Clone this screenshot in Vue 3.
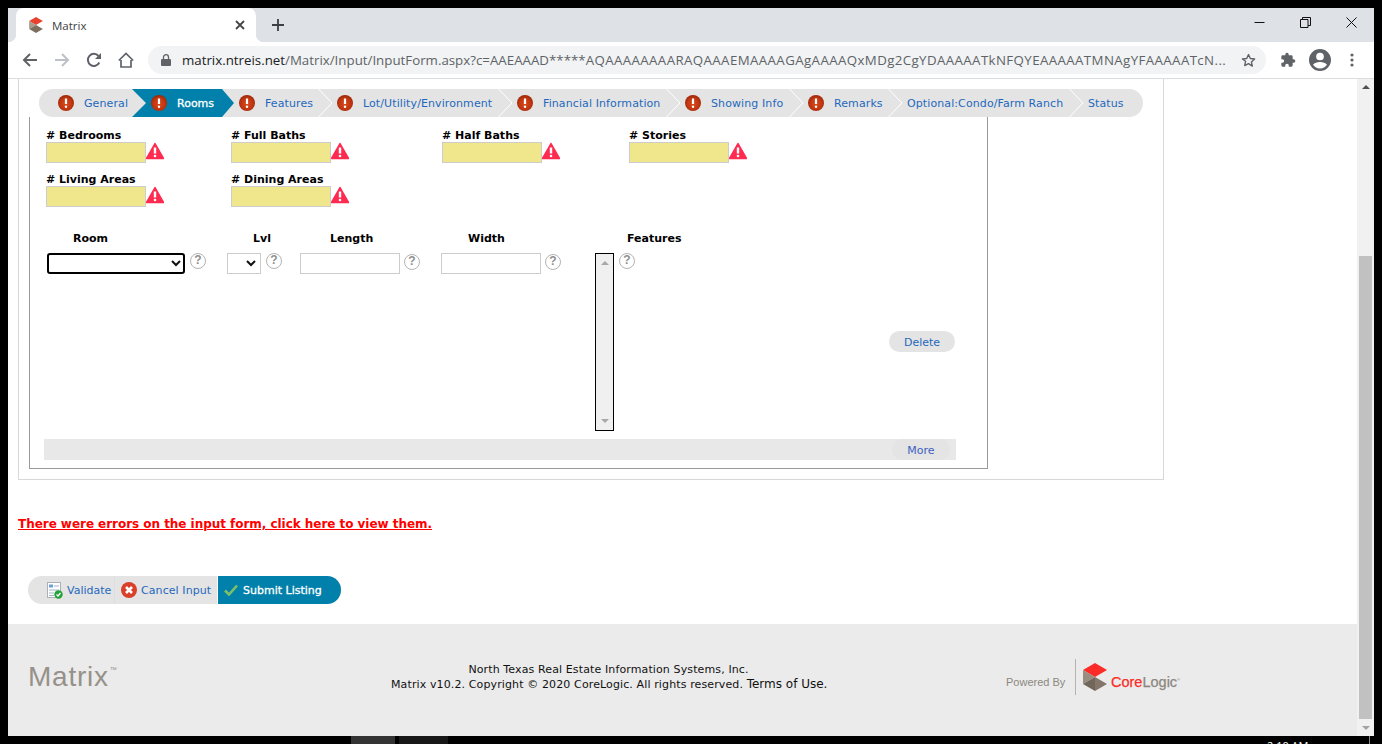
<script setup>
const steps = [
  { label: 'General', error: true },
  { label: 'Rooms', error: true, active: true },
  { label: 'Features', error: true, tight: true, chevron: true },
  { label: 'Lot/Utility/Environment', error: true, chevron: true },
  { label: 'Financial Information', error: true, chevron: true },
  { label: 'Showing Info', error: true, chevron: true },
  { label: 'Remarks', error: true, chevron: true },
  { label: 'Optional:Condo/Farm Ranch', chevron: true },
  { label: 'Status' }
]
const fields = ['# Bedrooms', '# Full Baths', '# Half Baths', '# Stories', '# Living Areas', '# Dining Areas']
</script>

<template>
  <div class="screen">
    <svg class="defs" width="0" height="0">
      <defs>
        <radialGradient id="errg" cx="50%" cy="55%" r="55%">
          <stop offset="0" stop-color="#dc4a1c" />
          <stop offset="0.7" stop-color="#bd3510" />
          <stop offset="1" stop-color="#982607" />
        </radialGradient>
      </defs>
    </svg>
    <div class="window">
      <div class="tabstrip">
        <div class="tab">
          <svg class="favicon" width="14" height="16" viewBox="0 0 24 28">
            <path d="M0 7 12 0l12 7-12 7z" fill="#e8432e" />
            <path d="M0 7l12 7-12 7z" fill="#a99b8c" />
            <path d="M0 21l12-7 12 7-12 7z" fill="#7d6f60" />
          </svg>
          <span class="tab-title">Matrix</span>
          <svg class="tab-close" width="10" height="10" viewBox="0 0 10 10">
            <path d="M1 1l8 8M9 1l-8 8" stroke="#44474a" stroke-width="1.8" />
          </svg>
        </div>
        <svg class="new-tab" width="12" height="12" viewBox="0 0 12 12">
          <path d="M6 0v12M0 6h12" stroke="#3c4043" stroke-width="1.8" />
        </svg>
        <div class="win-controls">
          <svg width="11" height="11" viewBox="0 0 11 11"><path d="M.5 5.500h10" stroke="#111" stroke-width="1" /></svg>
          <svg width="11" height="11" viewBox="0 0 11 11" fill="none"><path d="M.5 2.500h7.500v8h-7.500z M2.500 2.500v-2h8v8h-2.500" stroke="#111" stroke-width="1" /></svg>
          <svg width="11" height="11" viewBox="0 0 11 11"><path d="M.5.5l10 10M10.500.5l-10 10" stroke="#111" stroke-width="1" /></svg>
        </div>
      </div>

      <div class="toolbar">
        <div class="nav-icons">
          <svg width="16" height="16" viewBox="0 0 16 16" fill="none"><path d="M15 8H2M8 2 2 8l6 6" stroke="#5f6368" stroke-width="2" /></svg>
          <svg width="16" height="16" viewBox="0 0 16 16" fill="none"><path d="M1 8h13M8 2l6 6-6 6" stroke="#bdc1c6" stroke-width="2" /></svg>
          <svg width="16" height="16" viewBox="0 0 16 16" fill="none"><path d="M13.300 10.500A6 6 0 1 1 12.500 4" stroke="#5f6368" stroke-width="2" /><path d="M15 1v6H9z" fill="#5f6368" /></svg>
          <svg width="16" height="16" viewBox="0 0 16 16" fill="none"><path d="M3 8v7h10V8M.8 8.500 8 1.500l7.200 7" stroke="#5f6368" stroke-width="1.700" /></svg>
        </div>
        <div class="omnibox">
          <svg class="lock" width="10" height="12" viewBox="0 0 10 12">
            <path d="M1 5h8a1 1 0 0 1 1 1v5a1 1 0 0 1-1 1H1a1 1 0 0 1-1-1V6a1 1 0 0 1 1-1z" fill="#5f6368" />
            <path d="M2.500 5V3.200a2.500 2.500 0 0 1 5 0V5" fill="none" stroke="#5f6368" stroke-width="1.300" />
          </svg>
          <span class="url"><span class="host">matrix.ntreis.net</span>/Matrix/Input/InputForm.aspx?c=AAEAAAD*****<span class="token">AQAAAAAAAARAQAAAEMAAAAGAgAAAAQxMDg2CgYDAAAAATkNFQYEAAAAATMNAgYFAAAAATcN...</span></span>
          <svg class="star" width="15" height="15" viewBox="0 0 24 24" fill="none"><path d="M12 2.500l2.900 6.300 6.900.8-5.100 4.700 1.400 6.800L12 17l-6.100 3.100 1.400-6.800L2.200 9.600l6.900-.8z" stroke="#5f6368" stroke-width="2.200" stroke-linejoin="round" /></svg>
        </div>
        <div class="ext-icons">
          <svg width="16" height="16" viewBox="0 0 24 24"><path fill="#5f6368" d="M20.500 11H19V7a2 2 0 0 0-2-2h-4V3.500a2.500 2.500 0 0 0-5 0V5H4a2 2 0 0 0-2 2v3.800h1.500a2.700 2.700 0 0 1 0 5.400H2V20a2 2 0 0 0 2 2h3.800v-1.500a2.700 2.700 0 0 1 5.400 0V22H17a2 2 0 0 0 2-2v-4h1.500a2.500 2.500 0 0 0 0-5z" /></svg>
          <svg width="22" height="22" viewBox="0 0 24 24"><path fill="#5f6368" fill-rule="evenodd" d="M12 0a12 12 0 1 0 0 24 12 12 0 0 0 0-24zm0 4a4.200 4.200 0 1 1 0 8.400A4.200 4.200 0 0 1 12 4zm0 17.300a9.300 9.300 0 0 1-7.600-4c.9-2 4.900-3.100 7.600-3.100s6.700 1.100 7.600 3.100a9.300 9.300 0 0 1-7.600 4z" /></svg>
          <svg width="4" height="14" viewBox="0 0 4 14"><circle cx="2" cy="2" r="1.600" fill="#5f6368" /><circle cx="2" cy="7" r="1.600" fill="#5f6368" /><circle cx="2" cy="12" r="1.600" fill="#5f6368" /></svg>
        </div>
      </div>

      <div class="viewport">
        <div class="page">
          <div class="panel">
            <nav class="steps">
              <div v-for="s in steps" :key="s.label" class="step" :class="{ active: s.active, tight: s.tight }">
                <svg v-if="s.error" class="err" width="16" height="16" viewBox="0 0 16 16">
                  <circle cx="8" cy="8" r="8" fill="url(#errg)" />
                  <path d="M8 3.500v5.500" stroke="#fff" stroke-width="2.200" />
                  <circle cx="8" cy="11.800" r="1.200" fill="#fff" />
                </svg>
                <span>{{ s.label }}</span>
                <svg v-if="s.chevron" class="chev" width="15" height="28" viewBox="0 0 15 28" fill="none">
                  <path d="M.5 0 14 14 .5 28" stroke="#fff" stroke-width="1" />
                </svg>
              </div>
            </nav>

            <div class="box">
              <div class="fields">
                <div v-for="l in fields" :key="l" class="field">
                  <label>{{ l }}</label>
                  <div class="input-line">
                    <div class="req-input"></div>
                    <svg class="warn" width="18" height="18" viewBox="0 0 18 18">
                      <path d="M9 1.500 17.500 16.500H.5z" fill="#fe2b50" stroke="#fe2b50" stroke-width="1.500" stroke-linejoin="round" />
                      <path d="M9 5.500v6" stroke="#fff" stroke-width="2.400" />
                      <circle cx="9" cy="14" r="1.300" fill="#fff" />
                    </svg>
                  </div>
                </div>
              </div>

              <div class="room-heads">
                <b class="h-room">Room</b>
                <b class="h-lvl">Lvl</b>
                <b class="h-len">Length</b>
                <b class="h-wid">Width</b>
                <b class="h-fea">Features</b>
              </div>

              <div class="room-row">
                <div class="room-select">
                  <svg width="10" height="7" viewBox="0 0 10 7" fill="none"><path d="M1 1l4 4 4-4" stroke="#111" stroke-width="2" /></svg>
                </div>
                <span class="q">?</span>
                <div class="lvl-select">
                  <svg width="10" height="7" viewBox="0 0 10 7" fill="none"><path d="M1 1l4 4 4-4" stroke="#111" stroke-width="2" /></svg>
                </div>
                <span class="q">?</span>
                <div class="plain-input len"></div>
                <span class="q low">?</span>
                <div class="plain-input wid"></div>
                <span class="q low">?</span>
                <div class="listbox">
                  <i class="up"></i>
                  <i class="down"></i>
                </div>
                <span class="q">?</span>
                <div class="delete">Delete</div>
              </div>

              <div class="more-bar"><span class="more">More</span></div>
            </div>
          </div>

          <a class="error-link">There were errors on the input form, click here to view them.</a>

          <div class="actions">
            <div class="act validate">
              <svg width="16" height="17" viewBox="0 0 16 17">
                <rect x=".5" y=".5" width="13" height="15" fill="#fff" stroke="#aab0b6" />
                <rect x="2" y="2.500" width="4" height="3" fill="#6f9fd8" />
                <path d="M7 4h5M2 8h10M2 11h5M2 13.500h5" stroke="#9fb4c8" />
                <circle cx="11.500" cy="12.500" r="4.200" fill="#23a23a" />
                <path d="M9.500 12.500l1.500 1.500 2.500-3" stroke="#fff" stroke-width="1.300" fill="none" />
              </svg>
              <span>Validate</span>
            </div>
            <div class="act cancel">
              <svg width="16" height="16" viewBox="0 0 16 16">
                <circle cx="8" cy="8" r="8" fill="#d8402a" />
                <path d="M5 5l6 6M11 5l-6 6" stroke="#fff" stroke-width="2.600" />
              </svg>
              <span>Cancel Input</span>
            </div>
            <div class="act submit">
              <svg width="14" height="12" viewBox="0 0 14 12" fill="none"><path d="M1 6.500 5 10.500 13 1.500" stroke="#7cc06a" stroke-width="2.600" /></svg>
              <span>Submit Listing</span>
            </div>
          </div>

          <footer class="foot">
            <div class="foot-logo">Matrix<sup>™</sup></div>
            <div class="foot-text">
              <div>North Texas Real Estate Information Systems, Inc.</div>
              <div>Matrix v10.2. Copyright © 2020 CoreLogic. All rights reserved. <span class="terms">Terms of Use.</span></div>
            </div>
            <div class="foot-brand">
              <span class="powered">Powered By</span>
              <span class="brand-rule"></span>
              <svg width="24" height="28" viewBox="0 0 24 28">
                <path d="M0 7 12 0l12 7-12 7z" fill="#fb2b27" />
                <path d="M0 7l12 7L0 21z" fill="#9a8d80" />
                <path d="M12 14l12 7-12 7z" fill="#84766a" />
                <path d="M0 21l12-7v14z" fill="#72655a" />
              </svg>
              <span class="wordmark"><span class="core">Core</span>Logic<sup>®</sup></span>
            </div>
          </footer>
        </div>

        <div class="scrollbar">
          <i class="sb-up"></i>
          <div class="sb-track"><div class="sb-thumb"></div></div>
          <i class="sb-down"></i>
        </div>
      </div>
    </div>
    <div class="taskbar">
      <span class="task-btn"></span>
      <span class="task-btn2"></span>
      <span class="clock">2:10 AM</span>
      <span class="task-line"></span>
    </div>
  </div>
</template>

<style>
html, body { margin: 0; background: #000; overflow: hidden; }
</style>

<style scoped>
.screen { width: 1382px; height: 744px; background: #000; position: relative; overflow: hidden; }
.defs { position: absolute; }
.window { position: absolute; left: 8px; top: 8px; width: 1366px; height: 728px; display: flex; flex-direction: column; background: #fff; font-family: "DejaVu Sans", Verdana, sans-serif; }

.tabstrip { height: 34px; flex: none; background: #dee1e6; display: flex; align-items: center; padding-left: 8px; }
.tab { position: relative; width: 240px; height: 34px; box-sizing: border-box; background: #fff; border-radius: 8px 8px 0 0; display: flex; align-items: center; padding: 0 11px 0 13px; align-self: flex-end; }
.tab::before, .tab::after { content: ""; position: absolute; bottom: 0; width: 8px; height: 8px; }
.tab::before { left: -8px; background: radial-gradient(circle at 0 0, transparent 8px, #fff 8.500px); }
.tab::after { right: -8px; background: radial-gradient(circle at 100% 0, transparent 8px, #fff 8.500px); }
.favicon { flex: none; margin-right: 9px; }
.tab-title { font: 11.500px "Open Sans", "Noto Sans", sans-serif; color: #3c4043; flex: 1; }
.new-tab { margin-left: 16px; }
.win-controls { margin-left: auto; display: flex; gap: 35px; padding-right: 17px; align-self: flex-start; padding-top: 9px; }

.toolbar { height: 36px; flex: none; background: #fff; display: flex; align-items: center; border-bottom: 1px solid #dadce0; }
.nav-icons { display: flex; gap: 16px; padding-left: 14px; width: 126px; box-sizing: border-box; flex: none; margin-right: 14px; }
.omnibox { width: 1118px; height: 28px; flex: none; background: #f1f3f4; border-radius: 14px; display: flex; align-items: center; box-sizing: border-box; padding: 0 10px 0 13px; }
.lock { flex: none; margin-right: 11px; }
.url { font: 13.300px "Open Sans", "Noto Sans", sans-serif; color: #5f6368; white-space: nowrap; }
.host { color: #202124; }
.token { letter-spacing: .38px; }
.star { margin-left: auto; flex: none; }
.ext-icons { flex: 1; display: flex; align-items: center; padding-left: 14px; gap: 13px; }
.ext-icons svg:last-child { margin-left: 6px; }

.viewport { flex: 1; min-height: 0; display: flex; }
.page { flex: 1; min-width: 0; display: flex; flex-direction: column; font-size: 11px; color: #000; }

.panel { margin-left: 10px; width: 1146px; height: 401px; box-sizing: border-box; border: 1px solid #d8d8d8; border-top: 0; padding: 10px 0 0 20px; flex: none; }
.steps { display: grid; grid-template-columns: 93px 90px 96px 180px 168px 123px 99px 181px 74px; height: 28px; width: 1104px; background: #e4e4e4; border-radius: 14px; }
.step { position: relative; display: flex; align-items: center; gap: 10px; padding-left: 19px; color: #1f68bd; white-space: nowrap; font-size: 11px; letter-spacing: .1px; }
.step.tight { padding-left: 17px; }
.chev { position: absolute; left: 100%; top: 0; z-index: 1; }
.step.active { background: #0080aa; color: #fff; letter-spacing: 0; -webkit-text-stroke: .3px #fff; clip-path: polygon(0 0, 100% 0, 100% 100%, 0 100%, 14px 50%); }
.step.tight::before { content: ""; position: absolute; left: 0; top: 0; border-top: 14px solid transparent; border-bottom: 14px solid transparent; border-left: 12px solid #0080aa; z-index: 1; }
.err { flex: none; }

.box { margin-left: -10px; width: 959px; height: 352px; box-sizing: border-box; border: 1px solid #999; border-top: 0; padding: 11px 0 0 16px; }
.fields { display: grid; grid-template-columns: 185px 211px 187px 200px; grid-auto-rows: 44px; }
.field label { display: block; font-weight: 700; font-size: 11px; line-height: 16px; height: 14px; }
.input-line { display: flex; align-items: flex-start; }
.req-input { width: 100px; height: 21px; box-sizing: border-box; background: #f0e68c; border: 1px solid #ccc; }
.warn { flex: none; }

.room-heads { position: relative; height: 14px; margin-top: 16px; font-size: 11px; line-height: 14px; }
.room-heads b { position: absolute; top: 0; }
.h-room { left: 27px; }
.h-lvl { left: 207px; }
.h-len { left: 284px; }
.h-wid { left: 422px; }
.h-fea { left: 581px; }

.room-row { display: flex; align-items: flex-start; margin-top: 7px; height: 178px; position: relative; padding-left: 1px; }
.room-select { width: 138px; height: 21px; box-sizing: border-box; border: 2px solid #000; border-radius: 3px; display: flex; align-items: center; justify-content: flex-end; padding-right: 2px; flex: none; }
.lvl-select { width: 34px; height: 21px; box-sizing: border-box; border: 1px solid #ccc; display: flex; align-items: center; justify-content: flex-end; padding-right: 4px; flex: none; }
.plain-input { width: 100px; height: 21px; box-sizing: border-box; border: 1px solid #ccc; flex: none; }
.q { width: 16px; height: 16px; box-sizing: border-box; flex: none; border: 1.500px solid #b4b4b4; border-radius: 50%; color: #8f8f8f; font: 700 12px/13px "Liberation Sans", sans-serif; text-align: center; }
.q.low { margin-top: 1px; }
.room-select + .q { margin-left: 5px; margin-right: 21px; }
.lvl-select + .q { margin-left: 5px; margin-right: 18px; }
.len + .q { margin-left: 4px; margin-right: 21px; }
.wid + .q { margin-left: 4px; margin-right: 34px; }
.listbox { width: 19px; height: 178px; box-sizing: border-box; border: 1px solid #000; background: #f0f0f0; flex: none; display: flex; flex-direction: column; justify-content: space-between; align-items: center; padding: 7px 0; }
.listbox + .q { margin-left: 5px; }
.up { width: 0; height: 0; border: 4px solid transparent; border-top: 0; border-bottom-color: #a8a8a8; }
.down { width: 0; height: 0; border: 4px solid transparent; border-bottom: 0; border-top-color: #a8a8a8; }
.delete { position: absolute; left: 843px; top: 78px; width: 66px; height: 21px; border-radius: 11px; background: #e4e4e4; color: #1f68bd; font-size: 11px; line-height: 23px; text-align: center; }
.more-bar { margin: 8px 0 0 -2px; width: 912px; height: 21px; background: #e8e8e8; display: flex; justify-content: flex-end; padding-right: 6px; box-sizing: border-box; }
.more { width: 58px; height: 21px; border-radius: 11px; background: #e4e4e4; color: #3d62c0; font-size: 11px; line-height: 24px; text-align: center; }

.error-link { display: block; margin: 37px 0 0 10px; color: #f00; font-weight: 700; font-size: 12px; line-height: 14px; letter-spacing: -.04px; text-decoration: underline; }

.actions { display: flex; width: 313px; height: 28px; margin: 45px 0 0 20px; background: #e4e4e4; border-radius: 14px; overflow: hidden; flex: none; box-sizing: border-box; }
.act { display: flex; align-items: center; font-size: 11px; color: #1f68bd; }
.validate { width: 87px; padding-left: 19px; gap: 4px; box-sizing: border-box; border-right: 1px solid #dedede; }
.cancel { width: 102px; box-sizing: border-box; padding-left: 6px; gap: 4px; letter-spacing: .08px; }
.submit { flex: 1; border-left: 1px solid #fff; background: #0080aa; color: #fff; -webkit-text-stroke: .3px #fff; padding-left: 6px; gap: 5px; }

.foot { flex: 1; margin-top: 20px; background: #ebebeb; display: flex; align-items: flex-start; position: relative; }
.foot-logo { width: 250px; margin: 37px 0 0 20px; font: 28px/32px "Liberation Sans", Arial, sans-serif; color: #96918a; letter-spacing: .75px; flex: none; }
.foot-logo sup { font-size: 7px; vertical-align: 14px; line-height: 0; margin-left: 1px; letter-spacing: 0; }
.foot-text { position: absolute; left: 383px; top: 38px; width: 435px; text-align: center; font-size: 11px; line-height: 15px; color: #111; white-space: nowrap; letter-spacing: .12px; }
.terms { font-size: 12px; letter-spacing: 0; }
.foot-brand { position: absolute; left: 998px; top: 35px; display: flex; align-items: center; height: 36px; }
.powered { font: 11px "Liberation Sans", Arial, sans-serif; color: #8c8780; margin-top: 10px; width: 60px; white-space: nowrap; }
.brand-rule { width: 1px; height: 36px; background: #b9b2aa; margin: 0 7px 0 9px; }
.wordmark { font: 14.500px "Liberation Sans", Arial, sans-serif; -webkit-text-stroke: .25px; color: #8c8780; margin: 9px 0 0 4px; }
.core { color: #fb2b27; }
.wordmark sup { font-size: 4px; vertical-align: 6px; line-height: 0; -webkit-text-stroke: 0; }

.scrollbar { width: 17px; flex: none; background: #f1f1f1; display: flex; flex-direction: column; align-items: center; }
.sb-up { width: 0; height: 0; margin: 6px 0 0; border: 4px solid transparent; border-top: 0; border-bottom-color: #505050; flex: none; }
.sb-track { flex: 1; width: 100%; padding: 0 2px; box-sizing: border-box; display: flex; flex-direction: column; }
.sb-thumb { margin-top: 167px; width: 100%; height: 463px; background: #c1c1c1; }
.sb-down { width: 0; height: 0; margin: 0 0 6px; border: 4px solid transparent; border-bottom: 0; border-top-color: #a3a3a3; flex: none; }

.taskbar { position: absolute; left: 0; right: 0; top: 736px; height: 8px; }
.task-btn { position: absolute; left: 351px; top: 0; width: 44px; height: 8px; background: #333; }
.task-btn2 { position: absolute; left: 399px; top: 0; width: 49px; height: 8px; background: #171717; }
.task-line { position: absolute; left: 1369px; top: 0; width: 1px; height: 8px; background: #888; }
.clock { position: absolute; left: 1267px; top: 3px; font: 11px/14px "Open Sans", sans-serif; color: #fff; }
</style>
